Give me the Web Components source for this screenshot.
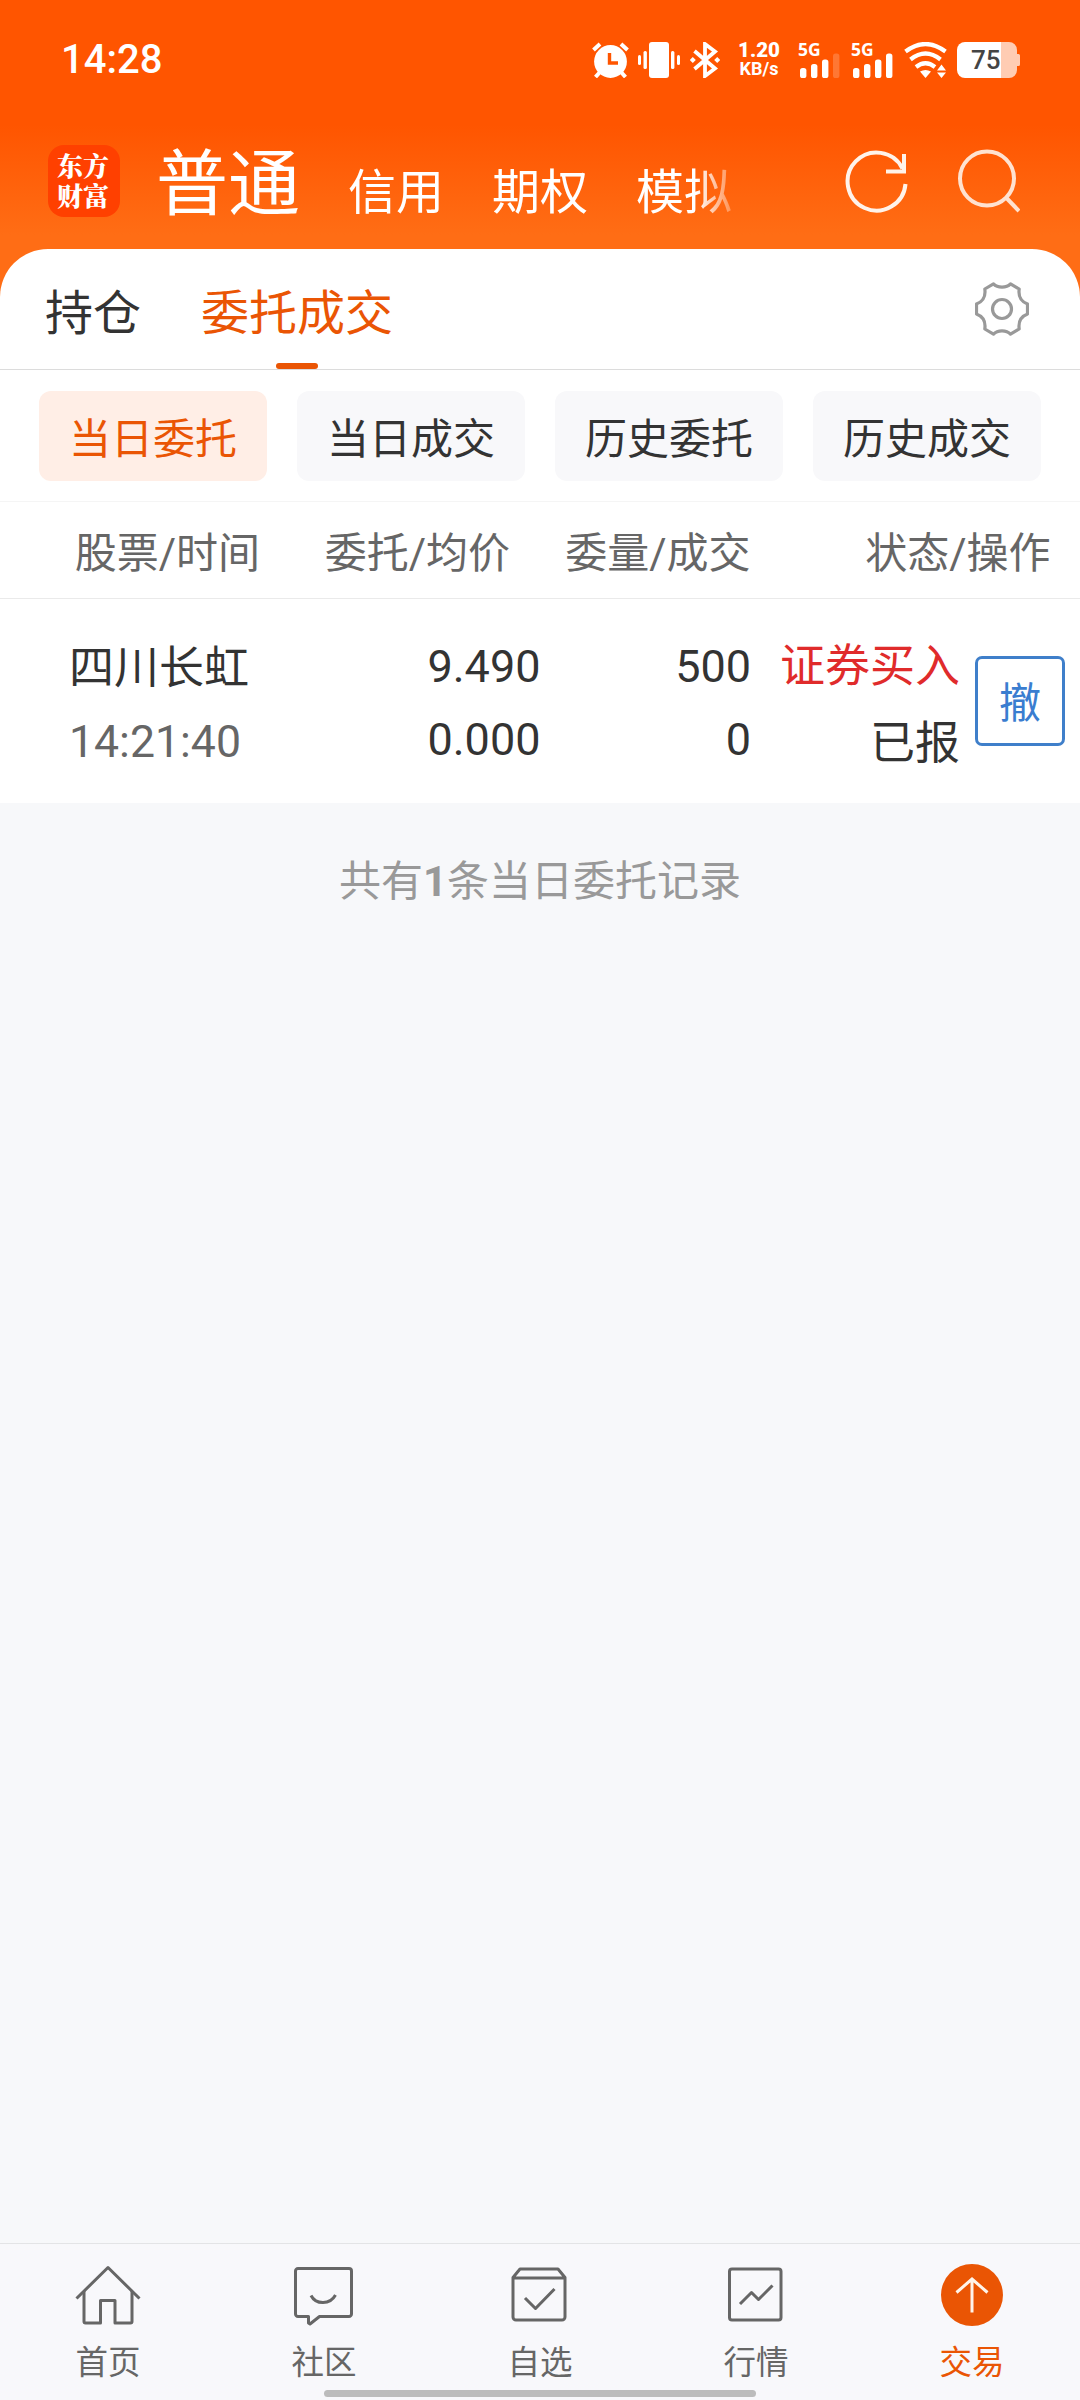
<!DOCTYPE html>
<html lang="zh-CN">
<head>
<meta charset="utf-8">
<title>委托成交</title>
<style>
  html, body { margin: 0; padding: 0; }
  body {
    width: 1080px;
    height: 2400px;
    overflow: hidden;
    font-family: Roboto, "Noto Sans CJK SC", sans-serif;
    color: #333;
    background: #f7f8fa;
  }
</style>
</head>
<body>
<trade-app></trade-app>

<script>
// Small helper: attach an open root and fill it with markup
function mount(el, html) {
  el.attachShadow({ mode: 'open' }).innerHTML = html;
}

/* Signal strength: label above four bars, the ones past `level` are dimmed */
class SignalBars extends HTMLElement {
  connectedCallback() {
    const level = Number(this.getAttribute('level'));
    const tops = [15, 11, 6.5, 0.5];
    const bars = tops.map((y, i) =>
      `<rect x="${2 + i * 11}" y="${y}" width="6.4" height="${25 - y}" rx="2.6" opacity="${i < level ? 1 : 0.2}"/>`
    ).join('');
    mount(this, `
      <style>
        :host { display: block; position: relative; width: 42px; height: 36px; }
        svg { display: block; margin-top: 11px; }
        span { position: absolute; left: 0; top: -2px; font: 700 17.5px/18px "Noto Sans", sans-serif; }
      </style>
      <span>5G</span>
      <svg width="42" height="25" fill="#fff">${bars}</svg>
    `);
  }
}
customElements.define('signal-bars', SignalBars);

class StatusBar extends HTMLElement {
  connectedCallback() {
    mount(this, `
      <style>
        :host {
          display: flex; align-items: center; box-sizing: border-box;
          height: 120px; padding: 0 60px 0 61px; color: #fff;
        }
        svg { display: block; flex: none; }
        .time { font-size: 40px; font-weight: 500; line-height: 48px; margin-right: auto; }
        .speed { width: 42px; text-align: center; margin: 0 18px 0 18px; font-weight: 700; white-space: nowrap; }
        .speed b { display: block; font-size: 20.5px; line-height: 18px; }
        .speed i { display: block; font-style: normal; font-size: 18px; line-height: 20px; }
        signal-bars { margin-right: 11px; }
        .battery { position: relative; width: 63px; height: 36px; margin-left: 10px; }
        .battery span {
          position: absolute; left: 14px; top: 0;
          font-size: 26px; line-height: 36px; font-weight: 500; color: #444;
        }
      </style>
      <span class="time">14:28</span>
      <svg width="37" height="36" viewBox="0 0 37 36" fill="none" stroke="#fff">
        <circle cx="18.5" cy="19.5" r="16.4" fill="#fff" stroke="none"/>
        <path d="M1.5 8 8 2M35.5 8 29 2M3.5 35 8 30M33.5 35 29 30" stroke-width="4"/>
        <path d="M17.5 11v10h8.5" stroke="#ff5500" stroke-width="3.4"/>
      </svg>
      <svg width="42" height="36" viewBox="0 0 42 36" fill="#fff" style="margin-left:9px">
        <rect x="11" width="20" height="36" rx="3"/>
        <rect x="5.5" y="9" width="3.4" height="18" rx="1.5"/>
        <rect x="0" y="13" width="3" height="10" rx="1.5"/>
        <rect x="33" y="9" width="3.4" height="18" rx="1.5"/>
        <rect x="39" y="13" width="3" height="10" rx="1.5"/>
      </svg>
      <svg width="30" height="36" viewBox="0 0 30 36" fill="none" stroke="#fff" stroke-width="3.8" style="margin-left:10px">
        <path d="M4.5 9 25 26.5 15 34V2L25 9.5 4.5 27"/>
        <path d="M2.8 15 5.8 18 2.8 21-.2 18ZM27.2 15 30.2 18 27.2 21 24.2 18Z" fill="#fff" stroke="none"/>
      </svg>
      <div class="speed"><b>1.20</b><i>KB/s</i></div>
      <signal-bars level="3"></signal-bars>
      <signal-bars level="4"></signal-bars>
      <svg width="43" height="36" viewBox="0 0 43 36" fill="none" stroke="#fff" stroke-width="4.2">
        <path d="M1.5 9.5Q21.5-5.5 41.5 9.5M6.5 17.5Q21.5 5.5 36.5 17.5M12 25Q21.5 17.5 31 25"/>
        <path d="M16 29.5Q21.5 26.5 27 29.5L21.5 36Z" fill="#fff" stroke="none"/>
        <path d="M33 28.5 37.5 22.5 42 28.5ZM33 30.5 37.5 36 42 30.5Z" fill="#fff" stroke="none"/>
      </svg>
      <div class="battery">
        <svg width="63" height="36" viewBox="0 0 63 36">
          <path d="M44 0h8a8 8 0 0 1 8 8v4h1.5a1.5 1.5 0 0 1 1.5 1.5v9a1.5 1.5 0 0 1-1.5 1.5H60v4a8 8 0 0 1-8 8h-8z" fill="#ffccb3"/>
          <path d="M44 0H8a8 8 0 0 0-8 8v20a8 8 0 0 0 8 8h36z" fill="#fff"/>
        </svg>
        <span>75</span>
      </div>
    `);
  }
}
customElements.define('status-bar', StatusBar);

class AccountNav extends HTMLElement {
  connectedCallback() {
    mount(this, `
      <style>
        :host {
          display: flex; align-items: flex-start; box-sizing: border-box;
          height: 129px; padding: 25px 60px 0 48px; color: #fff;
        }
        .logo {
          flex: none; box-sizing: border-box; width: 72px; height: 72px; padding: 5px 9px 0 9px;
          border-radius: 16px; background: #ff4000;
          font: 900 26px/30px "Noto Serif CJK SC", "Noto Sans CJK SC", sans-serif;
        }
        .tabs {
          display: flex; align-items: flex-end; gap: 48px; height: 76px;
          margin-left: 36px; margin-right: auto; width: 584px;
          font-size: 48px; line-height: 56px; white-space: nowrap;
          -webkit-mask-image: linear-gradient(90deg, #000 540px, transparent 590px);
          mask-image: linear-gradient(90deg, #000 540px, transparent 590px);
        }
        .tabs b { font-weight: 400; font-size: 72px; line-height: 73px; }
        svg { flex: none; }
      </style>
      <div class="logo">东方财富</div>
      <div class="tabs"><b>普通</b><span>信用</span><span>期权</span><span>模拟</span></div>
      <svg width="64" height="64" viewBox="0 0 64 64" fill="none" stroke="#fff3ea" stroke-width="4" style="margin:5px 47px 0 0">
        <path d="M60.5 34A29 29 0 1 1 57.5 18.5"/>
        <path d="M59 4v17.5H41"/>
      </svg>
      <svg width="64" height="66" viewBox="0 0 64 66" fill="none" stroke="#ffe2d0" stroke-width="4" style="margin:3px 0 0 0">
        <circle cx="31" cy="30.5" r="27"/>
        <path d="M50 49.5 63 63"/>
      </svg>
    `);
  }
}
customElements.define('account-nav', AccountNav);

class SectionTabs extends HTMLElement {
  connectedCallback() {
    mount(this, `
      <style>
        :host {
          display: flex; align-items: center; box-sizing: border-box;
          height: 121px; padding: 0 51px 0 45px; border-bottom: 1px solid #dcdcdc;
          font-size: 48px; line-height: 120px;
        }
        .on { position: relative; margin-left: 60px; color: #ea5504; }
        .on::after {
          content: ""; position: absolute; left: 75px; bottom: 0;
          width: 42px; height: 6px; border-radius: 3px; background: #ea5504;
        }
        span { height: 120px; padding-top: 6px; box-sizing: border-box; line-height: 118px; }
        svg { margin-left: auto; }
      </style>
      <span>持仓</span>
      <span class="on">委托成交</span>
      <svg width="54" height="54" viewBox="0 0 54 54" fill="none" stroke="#999" stroke-width="3.2" stroke-linejoin="round">
        <path d="M18.5 1.8C22.5 6.2 31.5 6.2 35.5 1.8L44.2 7C43.2 14 46 19.5 52.5 22V32C46 34.5 43.2 40 44.2 47L35.5 52.2C31.5 47.8 22.5 47.8 18.5 52.2L9.8 47C10.8 40 8 34.5 1.5 32V22C8 19.5 10.8 14 9.8 7Z"/>
        <circle cx="27" cy="27" r="9.5"/>
      </svg>
    `);
  }
}
customElements.define('section-tabs', SectionTabs);

class FilterChip extends HTMLElement {
  connectedCallback() {
    mount(this, `
      <style>
        :host {
          display: block; flex: 1; box-sizing: border-box; height: 90px; padding-top: 4px;
          border-radius: 12px; background: #f8f8fa;
          text-align: center; font-size: 42px; line-height: 90px;
        }
        :host([active]) { background: #ffeee6; color: #ea5504; }
      </style>
      <slot></slot>
    `);
  }
}
customElements.define('filter-chip', FilterChip);

class OrderTable extends HTMLElement {
  connectedCallback() {
    mount(this, `
      <style>
        :host { display: block; }
        .head, .row { display: grid; box-sizing: border-box; }
        .head {
          grid-template-columns: 260px 250px 240.5px 300px; height: 98px;
          border-top: 1px solid #f5f5f5; border-bottom: 1px solid #eaeaea;
          color: #666; font-size: 42px; line-height: 104px; text-align: right;
        }
        .row {
          grid-template-columns: 231px 240.5px 210.5px 209px 105px; height: 204px;
          padding: 31px 0 0 69px; font-size: 45px; line-height: 73px; text-align: right;
        }
        .row div { white-space: nowrap; }
        .row p { margin: 0; height: 73px; }
        .name { text-align: left; }
        .name p + p { color: #666; font-size: 44.6px; padding-top: 3px; }
        .name p:first-child { padding-top: 2px; height: 71px; }
        .state p + p { padding-top: 4px; }
        .buy { color: #e02b2b; }
        button {
          justify-self: end; margin: 26px 0 0; width: 90px; height: 90px; padding: 6px 0 0;
          border: 3px solid #3f7fca; border-radius: 7px; background: #fff;
          color: #3a7dd0; font: inherit; font-size: 42px; line-height: 78px;
        }
      </style>
      <div class="head">
        <span>股票/时间</span><span>委托/均价</span><span>委量/成交</span><span>状态/操作</span>
      </div>
      <div class="row">
        <div class="name"><p>四川长虹</p><p>14:21:40</p></div>
        <div><p>9.490</p><p>0.000</p></div>
        <div><p>500</p><p>0</p></div>
        <div class="state"><p class="buy">证券买入</p><p>已报</p></div>
        <button>撤</button>
      </div>
    `);
  }
}
customElements.define('order-table', OrderTable);

class TabItem extends HTMLElement {
  connectedCallback() {
    mount(this, `
      <style>
        :host {
          display: flex; flex: 1; flex-direction: column; align-items: center;
          padding-top: 18px; color: #666; font-size: 32.5px; line-height: 40px;
        }
        :host([active]) { color: #ea5504; }
        ::slotted(svg) { display: block; margin-bottom: 17px; }
      </style>
      <slot name="icon"></slot>
      <span><slot></slot></span>
    `);
  }
}
customElements.define('tab-item', TabItem);

class TabBar extends HTMLElement {
  connectedCallback() {
    mount(this, `
      <style>
        :host {
          display: flex; position: relative; box-sizing: border-box; height: 157px;
          border-top: 1px solid #e3e4e6; background: #f8f8fb;
        }
        svg { fill: none; stroke: #666; stroke-width: 3; stroke-linejoin: round; }
        /* system gesture handle */
        .handle {
          position: absolute; left: 324px; bottom: 3px;
          width: 432px; height: 7px; border-radius: 4px; background: #bcbcbc;
        }
      </style>
      <tab-item>
        <svg slot="icon" width="66" height="64" viewBox="0 0 66 64">
          <path d="M1.5 36.5 33 5.5 64.5 36.5"/>
          <path d="M9 29V59.500a1.500 1.500 0 0 0 1.500 1.500H25.500V38.500H40V61H55.500a1.500 1.500 0 0 0 1.500-1.500V29"/>
        </svg>
        首页
      </tab-item>
      <tab-item>
        <svg slot="icon" width="66" height="64" viewBox="0 0 66 64">
          <path d="M7 6.500H58a2.500 2.500 0 0 1 2.500 2.500V52a2.500 2.500 0 0 1-2.500 2.500H28.500L19 62 17.500 61V54.500H7A2.500 2.500 0 0 1 4.500 52V9A2.500 2.500 0 0 1 7 6.500Z"/>
          <path d="M20 33.500C25 43 39 43 44.500 33"/>
        </svg>
        社区
      </tab-item>
      <tab-item>
        <svg slot="icon" width="66" height="64" viewBox="0 0 66 64">
          <path d="M13 7H51L58 15.500V55a3 3 0 0 1-3 3H9a3 3 0 0 1-3-3V15.500ZM6 16H58"/>
          <path d="M18 36 28.500 46.500 47.500 27"/>
        </svg>
        自选
      </tab-item>
      <tab-item>
        <svg slot="icon" width="66" height="64" viewBox="0 0 66 64">
          <rect x="6.500" y="7" width="51.500" height="51" rx="2.500"/>
          <path d="M17 42 28.500 30.500 35.500 37.500 49.500 23.500"/>
        </svg>
        行情
      </tab-item>
      <tab-item active>
        <svg slot="icon" width="66" height="64" viewBox="0 0 66 64">
          <circle cx="33" cy="33" r="31" fill="#ea5504" stroke="none"/>
          <path d="M17.500 30.500 33 17 48.500 30.500M33 17V50.500" stroke="#fff4ea" stroke-linejoin="miter"/>
        </svg>
        交易
      </tab-item>
      <div class="handle"></div>
    `);
  }
}
customElements.define('tab-bar', TabBar);

class TradeApp extends HTMLElement {
  connectedCallback() {
    mount(this, `
      <style>
        :host {
          display: flex; flex-direction: column; height: 2400px;
          background: linear-gradient(#ff5500 125px, #ff6d15 235px, #ff6d15 300px, #f7f8fa 300px);
        }
        .sheet { background: #fff; border-radius: 48px 48px 0 0; }
        .chips { display: flex; gap: 30px; padding: 21px 39px 20px; }
        .total {
          flex: 1; padding-top: 49px; text-align: center;
          color: #999; font-size: 42px; line-height: 60px;
        }
      </style>
      <status-bar></status-bar>
      <account-nav></account-nav>
      <div class="sheet">
        <section-tabs></section-tabs>
        <div class="chips">
          <filter-chip active>当日委托</filter-chip>
          <filter-chip>当日成交</filter-chip>
          <filter-chip>历史委托</filter-chip>
          <filter-chip>历史成交</filter-chip>
        </div>
        <order-table></order-table>
      </div>
      <div class="total">共有<b>1</b>条当日委托记录</div>
      <tab-bar></tab-bar>
    `);
  }
}
customElements.define('trade-app', TradeApp);
</script>
</body>
</html>
